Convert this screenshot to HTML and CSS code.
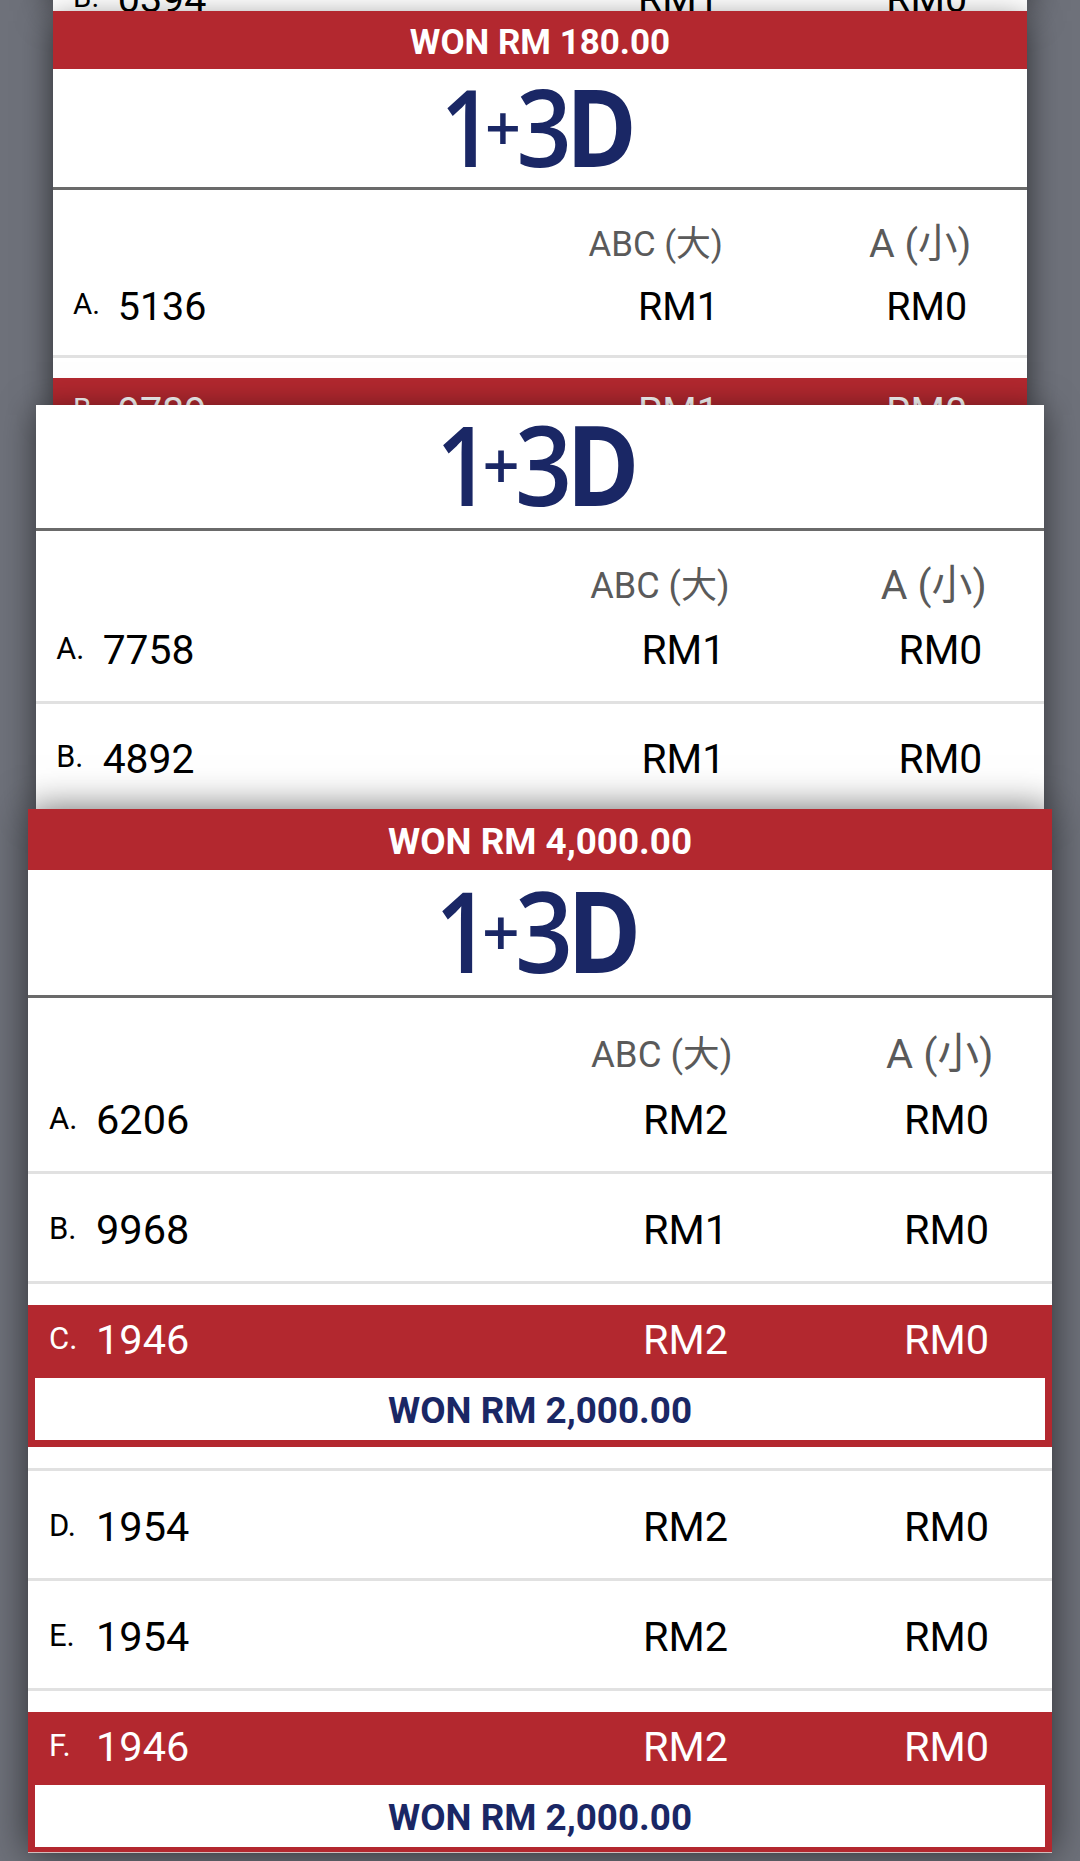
FILE: index.html
```html
<!DOCTYPE html>
<html lang="en">
<head>
    <meta charset="UTF-8">
    <meta name="viewport" content="width=device-width, initial-scale=1.0">
    <title>1+3D</title>
    <link rel="stylesheet" href="styles.css">
</head>
<body>
    <div class="ticket ticket-first">
        <div class="row">
            <span class="label">B.</span><span>0394</span><span>RM1</span><span>RM0</span>
        </div>
    </div>

    <div class="ticket ticket-second">
        <div class="won"><span>WON RM 180.00</span></div>
        <div class="logo">
            <svg viewBox="0 0 194 83">
                <text class="logo-one" transform="translate(-8 82) scale(.86 1)">1</text>
                <text class="logo-plus" transform="translate(39 65)">+</text>
                <text class="logo-three" transform="translate(72 82) scale(.9 1)">3</text>
                <text class="logo-d" transform="translate(124 82) scale(.89 1)">D</text>
            </svg>
        </div>
        <div class="head"><span class="big">ABC (大)</span><span class="small">A (小)</span></div>
        <div class="row top">
            <span class="label">A.</span><span>5136</span><span>RM1</span><span>RM0</span>
        </div>
        <div class="winner">
            <div class="row">
                <span class="label">B.</span><span>9789</span><span>RM1</span><span>RM0</span>
            </div>
        </div>
    </div>

    <div class="ticket ticket-third">
        <div class="logo">
            <svg viewBox="0 0 194 83">
                <text class="logo-one" transform="translate(-8 82) scale(.86 1)">1</text>
                <text class="logo-plus" transform="translate(39 65)">+</text>
                <text class="logo-three" transform="translate(72 82) scale(.9 1)">3</text>
                <text class="logo-d" transform="translate(124 82) scale(.89 1)">D</text>
            </svg>
        </div>
        <div class="head"><span class="big">ABC (大)</span><span class="small">A (小)</span></div>
        <div class="row top">
            <span class="label">A.</span><span>7758</span><span>RM1</span><span>RM0</span>
        </div>
        <div class="row">
            <span class="label">B.</span><span>4892</span><span>RM1</span><span>RM0</span>
        </div>
    </div>

    <div class="ticket ticket-last">
        <div class="won"><span>WON RM 4,000.00</span></div>
        <div class="logo">
            <svg viewBox="0 0 194 83">
                <text class="logo-one" transform="translate(-8 82) scale(.86 1)">1</text>
                <text class="logo-plus" transform="translate(39 65)">+</text>
                <text class="logo-three" transform="translate(72 82) scale(.9 1)">3</text>
                <text class="logo-d" transform="translate(124 82) scale(.89 1)">D</text>
            </svg>
        </div>
        <div class="head"><span class="big">ABC (大)</span><span class="small">A (小)</span></div>
        <div class="row top">
            <span class="label">A.</span><span>6206</span><span>RM2</span><span>RM0</span>
        </div>
        <div class="row">
            <span class="label">B.</span><span>9968</span><span>RM1</span><span>RM0</span>
        </div>
        <div class="winner">
            <div class="row">
                <span class="label">C.</span><span>1946</span><span>RM2</span><span>RM0</span>
            </div>
            <div class="prize"><span>WON RM 2,000.00</span></div>
        </div>
        <div class="row">
            <span class="label">D.</span><span>1954</span><span>RM2</span><span>RM0</span>
        </div>
        <div class="row">
            <span class="label">E.</span><span>1954</span><span>RM2</span><span>RM0</span>
        </div>
        <div class="winner">
            <div class="row">
                <span class="label">F.</span><span>1946</span><span>RM2</span><span>RM0</span>
            </div>
            <div class="prize"><span>WON RM 2,000.00</span></div>
        </div>
    </div>
</body>
</html>
```
FILE: styles.css
```css
* {
    box-sizing: border-box;
}
body {
    margin: 0;
    height: 1861px;
    overflow: hidden;
    background-color: #6e717a;
    font-family: Roboto, "Noto Sans CJK SC", sans-serif;
    color: #000;
}

/* everything in a ticket is sized in em, so the ticket scales with its font size */
.ticket {
    position: relative;
    width: 102.4em;
    margin: 0 auto;
    background-color: #fff;
    font-size: 10px;
    box-shadow: 0 0 36px rgba(0,0,0,0.6);
}
.ticket-first {
    font-size: 9.51px;
    height: 65px;
    margin-top: -54.5px;
}
.ticket-second {
    font-size: 9.51px;
    height: 394px;
    box-shadow: 0 10px 30px rgba(0,0,0,0.6);
}
.ticket-third {
    font-size: 9.85px;
    height: 404px;
    box-shadow: 0 5px 32px rgba(0,0,0,0.55);
}
.ticket-last {
    height: 1044px;
    overflow: hidden;
    border-bottom: 1px solid #d2bcbc;
}
.won {
    height: 6.1em;
    background-color: #b3282f;
}
.won, .prize {
    display: flex;
    align-items: center;
    justify-content: center;
    color: #fff;
    font-weight: 700;
}
.won span, .prize span {
    padding-top: 0.17em;
    font-size: 3.68em;
    line-height: 1;
}
.logo {
    display: flex;
    justify-content: center;
    height: 12.8em;
    padding-top: 2.13em;
    border-bottom: 3px solid #6a6a6a;
}
.logo svg {
    width: 19.4em;
    height: 8.3em;
    overflow: visible;
}
.logo-one, .logo-three, .logo-plus, .logo-d {
    font-family: "Open Sans", sans-serif;
    font-size: 113px;
    font-weight: 600;
    fill: #1a2765;
}
.logo-plus {
    font-size: 66px;
}
.logo-d {
    font-weight: 700;
}
.head {
    display: grid;
    grid-template-columns: 56.3em 29.5em 1fr;
    align-items: baseline;
    height: 8.8em;
    padding-top: 2.3em;
    color: #5a5a5a;
}
.head .big {
    grid-column: 2;
    position: relative;
    top: -1px;
    font-size: 3.66em;
    line-height: 1.76;
}
.head .small {
    font-size: 4.15em;
    line-height: 1.6;
}
.row {
    display: grid;
    grid-template-columns: 4.7em 54.7em 26.1em 1fr;
    align-items: center;
    height: 11em;
    padding: 0.2em 0 0 2.1em;
    border-bottom: 3px solid #e1e1e1;
}
.row span {
    padding-top: 0.08em;
    font-size: 4.15em;
    line-height: 1;
}
.row .label {
    padding-top: 0;
    font-size: 3.1em;
}
.row.top {
    height: 8.8em;
    padding-top: 0;
    padding-bottom: 2em;
}
.winner {
    padding: 2.1em 0 2.1em;
    border-bottom: 3px solid #e1e1e1;
}
.winner .row {
    height: 7.3em;
    padding-top: 0;
    padding-bottom: 0.5em;
    border: 0;
    background-color: #b3282f;
    color: #fff;
}
.prize {
    height: 6.9em;
    border: 0.75em solid #b3282f;
    border-top: 0;
    color: #1a2765;
}
```
